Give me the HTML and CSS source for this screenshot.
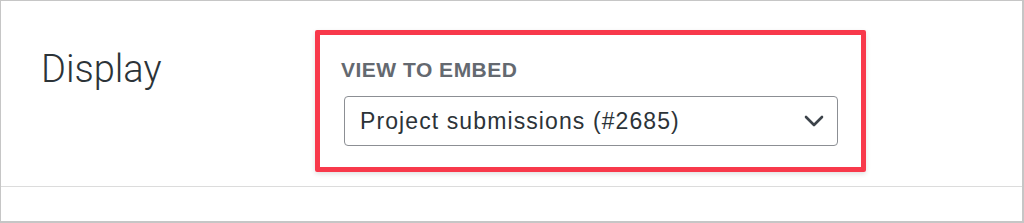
FILE: index.html
```html
<!DOCTYPE html>
<html lang="en">
<head>
    <meta charset="UTF-8">
    <meta name="viewport" content="width=device-width, initial-scale=1.0">
    <title>Display settings</title>
    <link rel="stylesheet" href="styles.css">
</head>
<body>
    <div class="frame">
        <div class="row">
            <h2 class="row-title">Display</h2>
            <div class="highlight">
                <label class="field-label">View to embed</label>
                <div class="select-box">
                    <span class="select-value">Project submissions (#2685)</span>
                    <svg class="chevron" width="20" height="12" viewBox="0 0 20 12">
                        <path d="M2 2 L10 10 L18 2" fill="none" stroke="#3c434a" stroke-width="2.6" stroke-linecap="round" stroke-linejoin="round"/>
                    </svg>
                </div>
            </div>
        </div>
        <div class="rest"></div>
    </div>
</body>
</html>
```

FILE: styles.css
```css
*{
    margin: 0;
    padding: 0;
    box-sizing: border-box;
}
body{
    background: #fff;
    font-family: "Liberation Sans", Arial, sans-serif;
}
.frame{
    width: 1024px;
    height: 223px;
    border: 1px solid #c6c6c6;
    border-right-width: 2px;
    border-bottom-width: 2px;
    background: #fff;
}
.row{
    display: flex;
    align-items: flex-start;
    height: 186px;
    padding-top: 29px;
    border-bottom: 1px solid #dcdcdc;
}
.row-title{
    width: 314px;
    padding-left: 40px;
    padding-top: 17px;
    font-family: "Roboto", "Liberation Sans", sans-serif;
    font-weight: 300;
    font-size: 38px;
    line-height: 44px;
    color: #2c3338;
}
.highlight{
    width: 551px;
    height: 142px;
    border: 5px solid #f8394b;
    border-radius: 2px;
    box-shadow: 0 2px 5px rgba(0,0,0,0.12);
    padding: 23px 23px 0 24px;
}
.field-label{
    display: block;
    font-weight: bold;
    font-size: 21px;
    line-height: 24px;
    text-transform: uppercase;
    letter-spacing: 0.5px;
    color: #646970;
    margin-left: -3px;
}
.select-box{
    display: flex;
    align-items: center;
    justify-content: space-between;
    height: 50px;
    margin-top: 14px;
    border: 1px solid #8c8f94;
    border-radius: 4px;
    padding: 0 13px 0 15px;
}
.select-value{
    font-size: 23px;
    letter-spacing: 1.1px;
    color: #2c3338;
}
.chevron{
    display: block;
}
```
